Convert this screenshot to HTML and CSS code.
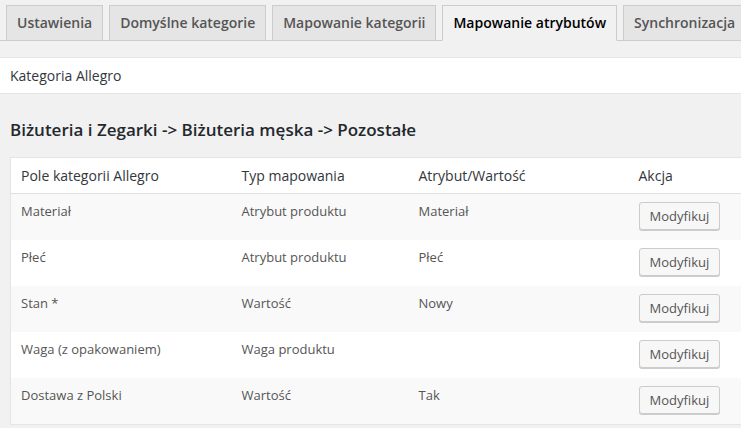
FILE: index.html
```
<!DOCTYPE html>
<html lang="pl">
<head>
<meta charset="utf-8">
<title>Mapowanie atrybutów</title>
<link rel="stylesheet" href="styles.css">
</head>
<body>
<nav class="tabs">
  <a class="tab">Ustawienia</a>
  <a class="tab">Domyślne kategorie</a>
  <a class="tab">Mapowanie kategorii</a>
  <a class="tab tab-active">Mapowanie atrybutów</a>
  <a class="tab">Synchronizacja</a>
</nav>
<div class="bar">Kategoria Allegro</div>
<h2 class="title">Biżuteria i Zegarki -&gt; Biżuteria męska -&gt; Pozostałe</h2>
<table class="grid">
  <colgroup>
    <col class="c1"><col class="c2"><col class="c3"><col class="c4">
  </colgroup>
  <thead>
    <tr><th>Pole kategorii Allegro</th><th>Typ mapowania</th><th>Atrybut/Wartość</th><th>Akcja</th></tr>
  </thead>
  <tbody>
    <tr><td>Materiał</td><td>Atrybut produktu</td><td>Materiał</td><td><button class="btn">Modyfikuj</button></td></tr>
    <tr><td>Płeć</td><td>Atrybut produktu</td><td>Płeć</td><td><button class="btn">Modyfikuj</button></td></tr>
    <tr><td>Stan *</td><td>Wartość</td><td>Nowy</td><td><button class="btn">Modyfikuj</button></td></tr>
    <tr><td>Waga (z opakowaniem)</td><td>Waga produktu</td><td></td><td><button class="btn">Modyfikuj</button></td></tr>
    <tr><td>Dostawa z Polski</td><td>Wartość</td><td>Tak</td><td><button class="btn">Modyfikuj</button></td></tr>
  </tbody>
</table>
</body>
</html>
```
FILE: styles.css
```
html { overflow: hidden; }
body {
  margin: 0;
  background: #f1f1f1;
  font-family: "Open Sans", "Liberation Sans", sans-serif;
  color: #444;
  font-size: 13px;
}
.tabs {
  display: flex;
  flex-wrap: nowrap;
  gap: 6px;
  padding: 5px 0 0 6px;
  border-bottom: 1px solid #ccc;
  white-space: nowrap;
}
.tab {
  flex: none;
  display: block;
  padding: 5px 10px;
  font-size: 14px;
  line-height: 24px;
  font-weight: 600;
  color: #555;
  background: #e5e5e5;
  border: 1px solid #ccc;
  margin-bottom: -1px;
}
.tab-active {
  background: #f1f1f1;
  color: #000;
  border-bottom-color: #f1f1f1;
}
.bar {
  margin-top: 16px;
  background: #fff;
  border-top: 1px solid #e5e5e5;
  border-bottom: 1px solid #e5e5e5;
  padding: 8px 10px;
  font-size: 14px;
  line-height: 19px;
  color: #32373c;
}
.title {
  margin: 24px 10px 16px;
  font-size: 17px;
  font-weight: 600;
  line-height: 23px;
  color: #23282d;
}
.grid {
  margin-left: 10px;
  border-collapse: collapse;
  table-layout: fixed;
  width: 770px;
  background: #fff;
  border: 1px solid #e5e5e5;
  box-shadow: 0 1px 1px rgba(0,0,0,.04);
}
.c1 { width: 221px; }
.c2 { width: 177px; }
.c3 { width: 220px; }
.grid th {
  text-align: left;
  font-weight: 400;
  font-size: 14px;
  line-height: 19px;
  padding: 8px 10px;
  color: #32373c;
  border-bottom: 1px solid #e1e1e1;
}
.grid td {
  vertical-align: top;
  padding: 8px 10px;
  font-size: 13px;
  line-height: 19.5px;
  color: #555;
}
.grid tbody tr:nth-child(odd) { background: #f9f9f9; }
.btn {
  display: inline-block;
  vertical-align: top;
  height: 28px;
  margin: 0 0 2px;
  padding: 0 10px 1px;
  font-family: "Open Sans", "Liberation Sans", sans-serif;
  font-size: 13px;
  line-height: 26px;
  color: #555;
  background: #f7f7f7;
  border: 1px solid #ccc;
  border-radius: 3px;
  box-shadow: 0 1px 0 #ccc;
  box-sizing: border-box;
}
```
